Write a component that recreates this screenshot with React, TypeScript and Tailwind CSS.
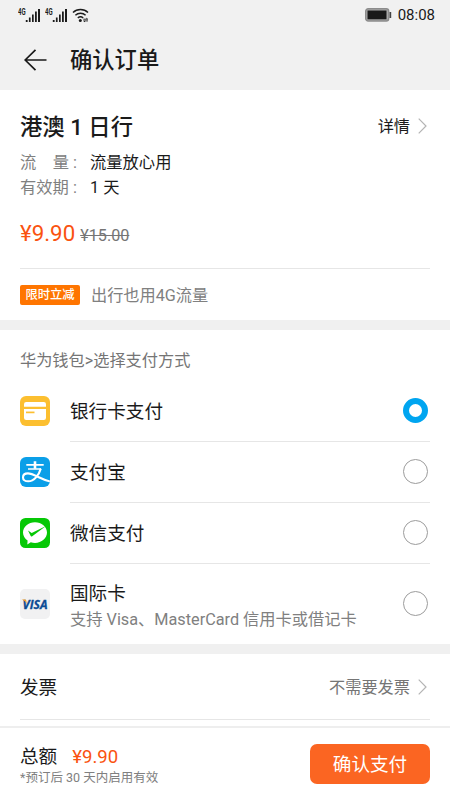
import React from 'react';

function Signal() {
  return (
    <svg width="24" height="15" viewBox="0 0 24 15" fill="#1c1c1c">
      <text x="0" y="6.600" fontSize="8.500" fontWeight="700" textLength="7.600" lengthAdjust="spacingAndGlyphs">4G</text>
      <rect x="7.800" y="12" width="1.800" height="2" />
      <rect x="10.900" y="9.500" width="1.700" height="4.500" />
      <rect x="14" y="6.500" width="1.700" height="7.500" />
      <rect x="17" y="3.500" width="1.800" height="10.500" />
      <rect x="20" y="1" width="2" height="13" />
    </svg>
  );
}

function Wifi() {
  return (
    <svg width="18" height="15" viewBox="0 0 18 15" fill="none" stroke="#1c1c1c" strokeWidth="1.400">
      <path d="M1 4.500C5 .4 12 .4 16 4.500" />
      <path d="M3.400 7.300c2.800-2.800 7.400-2.800 10.200 0" />
      <path d="M5.800 10c1.500-1.400 3.900-1.400 5.400 0" />
      <circle cx="8.300" cy="12.500" r="1.500" fill="#1c1c1c" stroke="none" />
      <path d="M11.300 11.200h4.400l-1.400-1M16 12.900h-4.400l1.400 1" strokeWidth="0.900" />
    </svg>
  );
}

function Chevron() {
  return (
    <svg width="9" height="16" viewBox="0 0 9 16" fill="none" stroke="#b4b4b4" strokeWidth="1.200">
      <path d="M.7.700 8 8 .7 15.300" />
    </svg>
  );
}

function BankIcon() {
  return (
    <svg width="30" height="30" viewBox="0 0 30 30">
      <rect width="30" height="30" rx="6" fill="#fcbf30" />
      <path d="M4 10.800V8.200Q4 6 6.200 6h17.600Q26 6 26 8.200v2.600z" fill="#fff" />
      <path d="M4 12.900h22v8.900q0 2.200-2.200 2.200H6.200Q4 24 4 21.800z" fill="#fff" />
      <path d="M6 16.400h8.500" stroke="#fcbf30" strokeWidth="1.700" />
    </svg>
  );
}

function AlipayIcon() {
  return (
    <svg width="30" height="30" viewBox="0 0 30 30">
      <defs>
        <clipPath id="alipay"><rect width="30" height="30" rx="6" /></clipPath>
      </defs>
      <g clipPath="url(#alipay)" fill="none" stroke="#fff">
        <rect width="30" height="30" fill="#0b9fe8" stroke="none" />
        <path d="M6.300 7.900h17.400M8 12h13" strokeWidth="1.700" />
        <path d="M15 4.200v7.600" strokeWidth="2.600" />
        <path d="M20.800 11.600C19 18 14 24.300 8.300 24.300c-3.500 0-5.300-1.700-5.300-3.900 0-2.400 2-4 4.900-4C13.500 16.400 20 22 31 24.800" strokeWidth="2.100" />
      </g>
    </svg>
  );
}

function WechatIcon() {
  return (
    <svg width="30" height="30" viewBox="0 0 30 30">
      <rect width="30" height="30" rx="5.500" fill="#06c806" />
      <path d="M15 4.200c6.600 0 12 4.700 12 10.400S21.600 25 15 25c-1.500 0-2.900-.2-4.200-.7L7.300 26.500l.3-3.900C4.800 20.700 3 17.800 3 14.600 3 8.900 8.400 4.200 15 4.200z" fill="#fff" />
      <path d="M8 12.400l3.700 2.500L26 8 11.900 18.400q-.8.500-1.200-.3z" fill="#06c806" />
    </svg>
  );
}

function VisaIcon() {
  return (
    <svg width="30" height="30" viewBox="0 0 30 30">
      <rect width="30" height="30" rx="5" fill="#f1f1f2" />
      <text x="2.600" y="19.600" fontFamily="Open Sans, sans-serif" fontSize="12.500" fontWeight="700" fontStyle="italic" fill="#0b4c94" stroke="#0b4c94" strokeWidth="0.300" textLength="25" lengthAdjust="spacingAndGlyphs">VISA</text>
      <path d="M1.700 10.500h3.600q.8 0 .9.800l.7 4C6 13 4 11.200 1.700 10.500z" fill="#f2a02c" />
    </svg>
  );
}

function Radio({ checked }: { checked?: boolean }) {
  return checked ? (
    <span className="mr-[2.5px] size-[25px] shrink-0 rounded-full border-[6px] border-[#00a5f0]" />
  ) : (
    <span className="mr-[2.5px] size-[25px] shrink-0 rounded-full border border-[#9c9c9c]" />
  );
}

function Method({ icon, name, checked }: { icon: React.ReactNode; name: string; checked?: boolean }) {
  return (
    <div className="flex h-[61.2px] gap-5">
      <div className="flex items-center">{icon}</div>
      <div className="flex flex-1 items-center justify-between border-b border-[#e6e6e6] text-[18.6px]">
        <span className="pt-[5px]">{name}</span>
        <Radio checked={checked} />
      </div>
    </div>
  );
}

export default function App() {
  return (
    <div className="flex h-[800px] w-[450px] flex-col overflow-hidden bg-white font-['Roboto','Noto_Sans_CJK_SC',sans-serif] text-[#1a1a1a]">
      <header className="h-[90px] shrink-0 bg-[#f1f1f1]">
        <div className="flex h-[30px] items-center justify-between pr-[15px] pl-[18px]">
          <div className="flex items-center gap-[3px]">
            <Signal />
            <Signal />
            <Wifi />
          </div>
          <div className="flex items-center gap-[6px]">
            <svg width="27" height="14" viewBox="0 0 27 14">
              <rect x=".7" y=".7" width="23" height="12.300" rx="2.500" fill="#aaa" stroke="#8c8c8c" strokeWidth="1.400" />
              <rect x="2.500" y="2.500" width="19" height="8.800" fill="#1a1a1a" />
              <rect x="24.500" y="4" width="1.700" height="6" fill="#444" />
            </svg>
            <span className="text-[15px] leading-5">08:08</span>
          </div>
        </div>
        <div className="flex h-[60px] items-center gap-[23px] pl-6">
          <svg width="23" height="22" viewBox="0 0 23 22" fill="none" stroke="#1a1a1a" strokeWidth="1.700">
            <path d="M22.500 11H1.200M11.500.8 1.200 11l10.300 10.200" />
          </svg>
          <h1 className="text-[22.3px] font-medium leading-[30px]">确认订单</h1>
        </div>
      </header>

      <section className="h-[230px] shrink-0 px-5 pt-[22px]">
        <div className="flex items-center justify-between">
          <h2 className="text-[22.3px] font-medium leading-[30px]">港澳 1 日行</h2>
          <div className="flex items-center gap-[8px] pr-[3px] text-[16.2px] leading-6">
            <span>详情</span>
            <span className="-mt-[3px]"><Chevron /></span>
          </div>
        </div>
        <div className="mt-2 grid grid-cols-[70px_1fr] text-[16.3px] leading-[25px]">
          <div className="flex text-[#808080]">
            <span className="flex w-[49px] justify-between"><span>流</span><span>量</span></span>
            <span className="pl-[4px]">:</span>
          </div>
          <span>流量放心用</span>
          <div className="flex text-[#808080]">
            <span className="w-[49px]">有效期</span>
            <span className="pl-[4px]">:</span>
          </div>
          <span>1 天</span>
        </div>
        <div className="mt-[18px] flex items-baseline gap-[5px] leading-[30px]">
          <span className="text-[22.3px] text-[#fa5310]">¥9.90</span>
          <span className="text-[16.2px] text-[#757575] line-through">¥15.00</span>
        </div>
        <div className="mt-[17px] flex h-[53px] items-center gap-[11px] border-t border-[#e6e6e6]">
          <span className="flex h-5 w-[60px] items-center justify-center rounded-[2px] bg-[#ff7500] text-[12.3px] font-medium text-white">限时立减</span>
          <span className="pt-[2px] text-[16.2px] text-[#808080]">出行也用4G流量</span>
        </div>
      </section>

      <section className="h-[334px] shrink-0 border-y-10 border-[#f0f0f0] px-5">
        <h3 className="h-[50.4px] pt-[19px] text-[16.2px] leading-6 text-[#757575]">华为钱包&gt;选择支付方式</h3>
        <Method icon={<BankIcon />} name="银行卡支付" checked />
        <Method icon={<AlipayIcon />} name="支付宝" />
        <Method icon={<WechatIcon />} name="微信支付" />
        <div className="flex h-20 items-center gap-5">
          <VisaIcon />
          <div className="flex flex-1 items-center justify-between">
            <div className="pt-[6px]">
              <div className="text-[18.6px] leading-[26px]">国际卡</div>
              <div className="text-[16.25px] leading-[25px] text-[#808080]">支持 Visa、MasterCard 信用卡或借记卡</div>
            </div>
            <Radio />
          </div>
        </div>
      </section>

      <section className="h-[72px] shrink-0 px-5">
        <div className="flex h-[66px] items-center justify-between border-b border-[#e6e6e6]">
          <span className="pt-1 text-[18.6px]">发票</span>
          <div className="flex items-center gap-[8px] pr-[3px] pt-px text-[16.2px] text-[#757575]">
            <span className="pt-[3px]">不需要发票</span>
            <Chevron />
          </div>
        </div>
      </section>

      <footer className="flex h-[74px] shrink-0 items-center justify-between border-t-2 border-[#eeeeee] px-5">
        <div className="pt-[2px]">
          <div className="flex items-baseline gap-[15px] leading-[26px]">
            <span className="text-[18.6px]">总额</span>
            <span className="text-[18.6px] text-[#fa5310]">¥9.90</span>
          </div>
          <div className="text-[12.5px] leading-4 text-[#808080]">*预订后 30 天内启用有效</div>
        </div>
        <button className="h-10 w-[120px] rounded-[7px] bg-[#fb6522] pt-[3px] text-[18.6px] text-white">确认支付</button>
      </footer>
    </div>
  );
}
